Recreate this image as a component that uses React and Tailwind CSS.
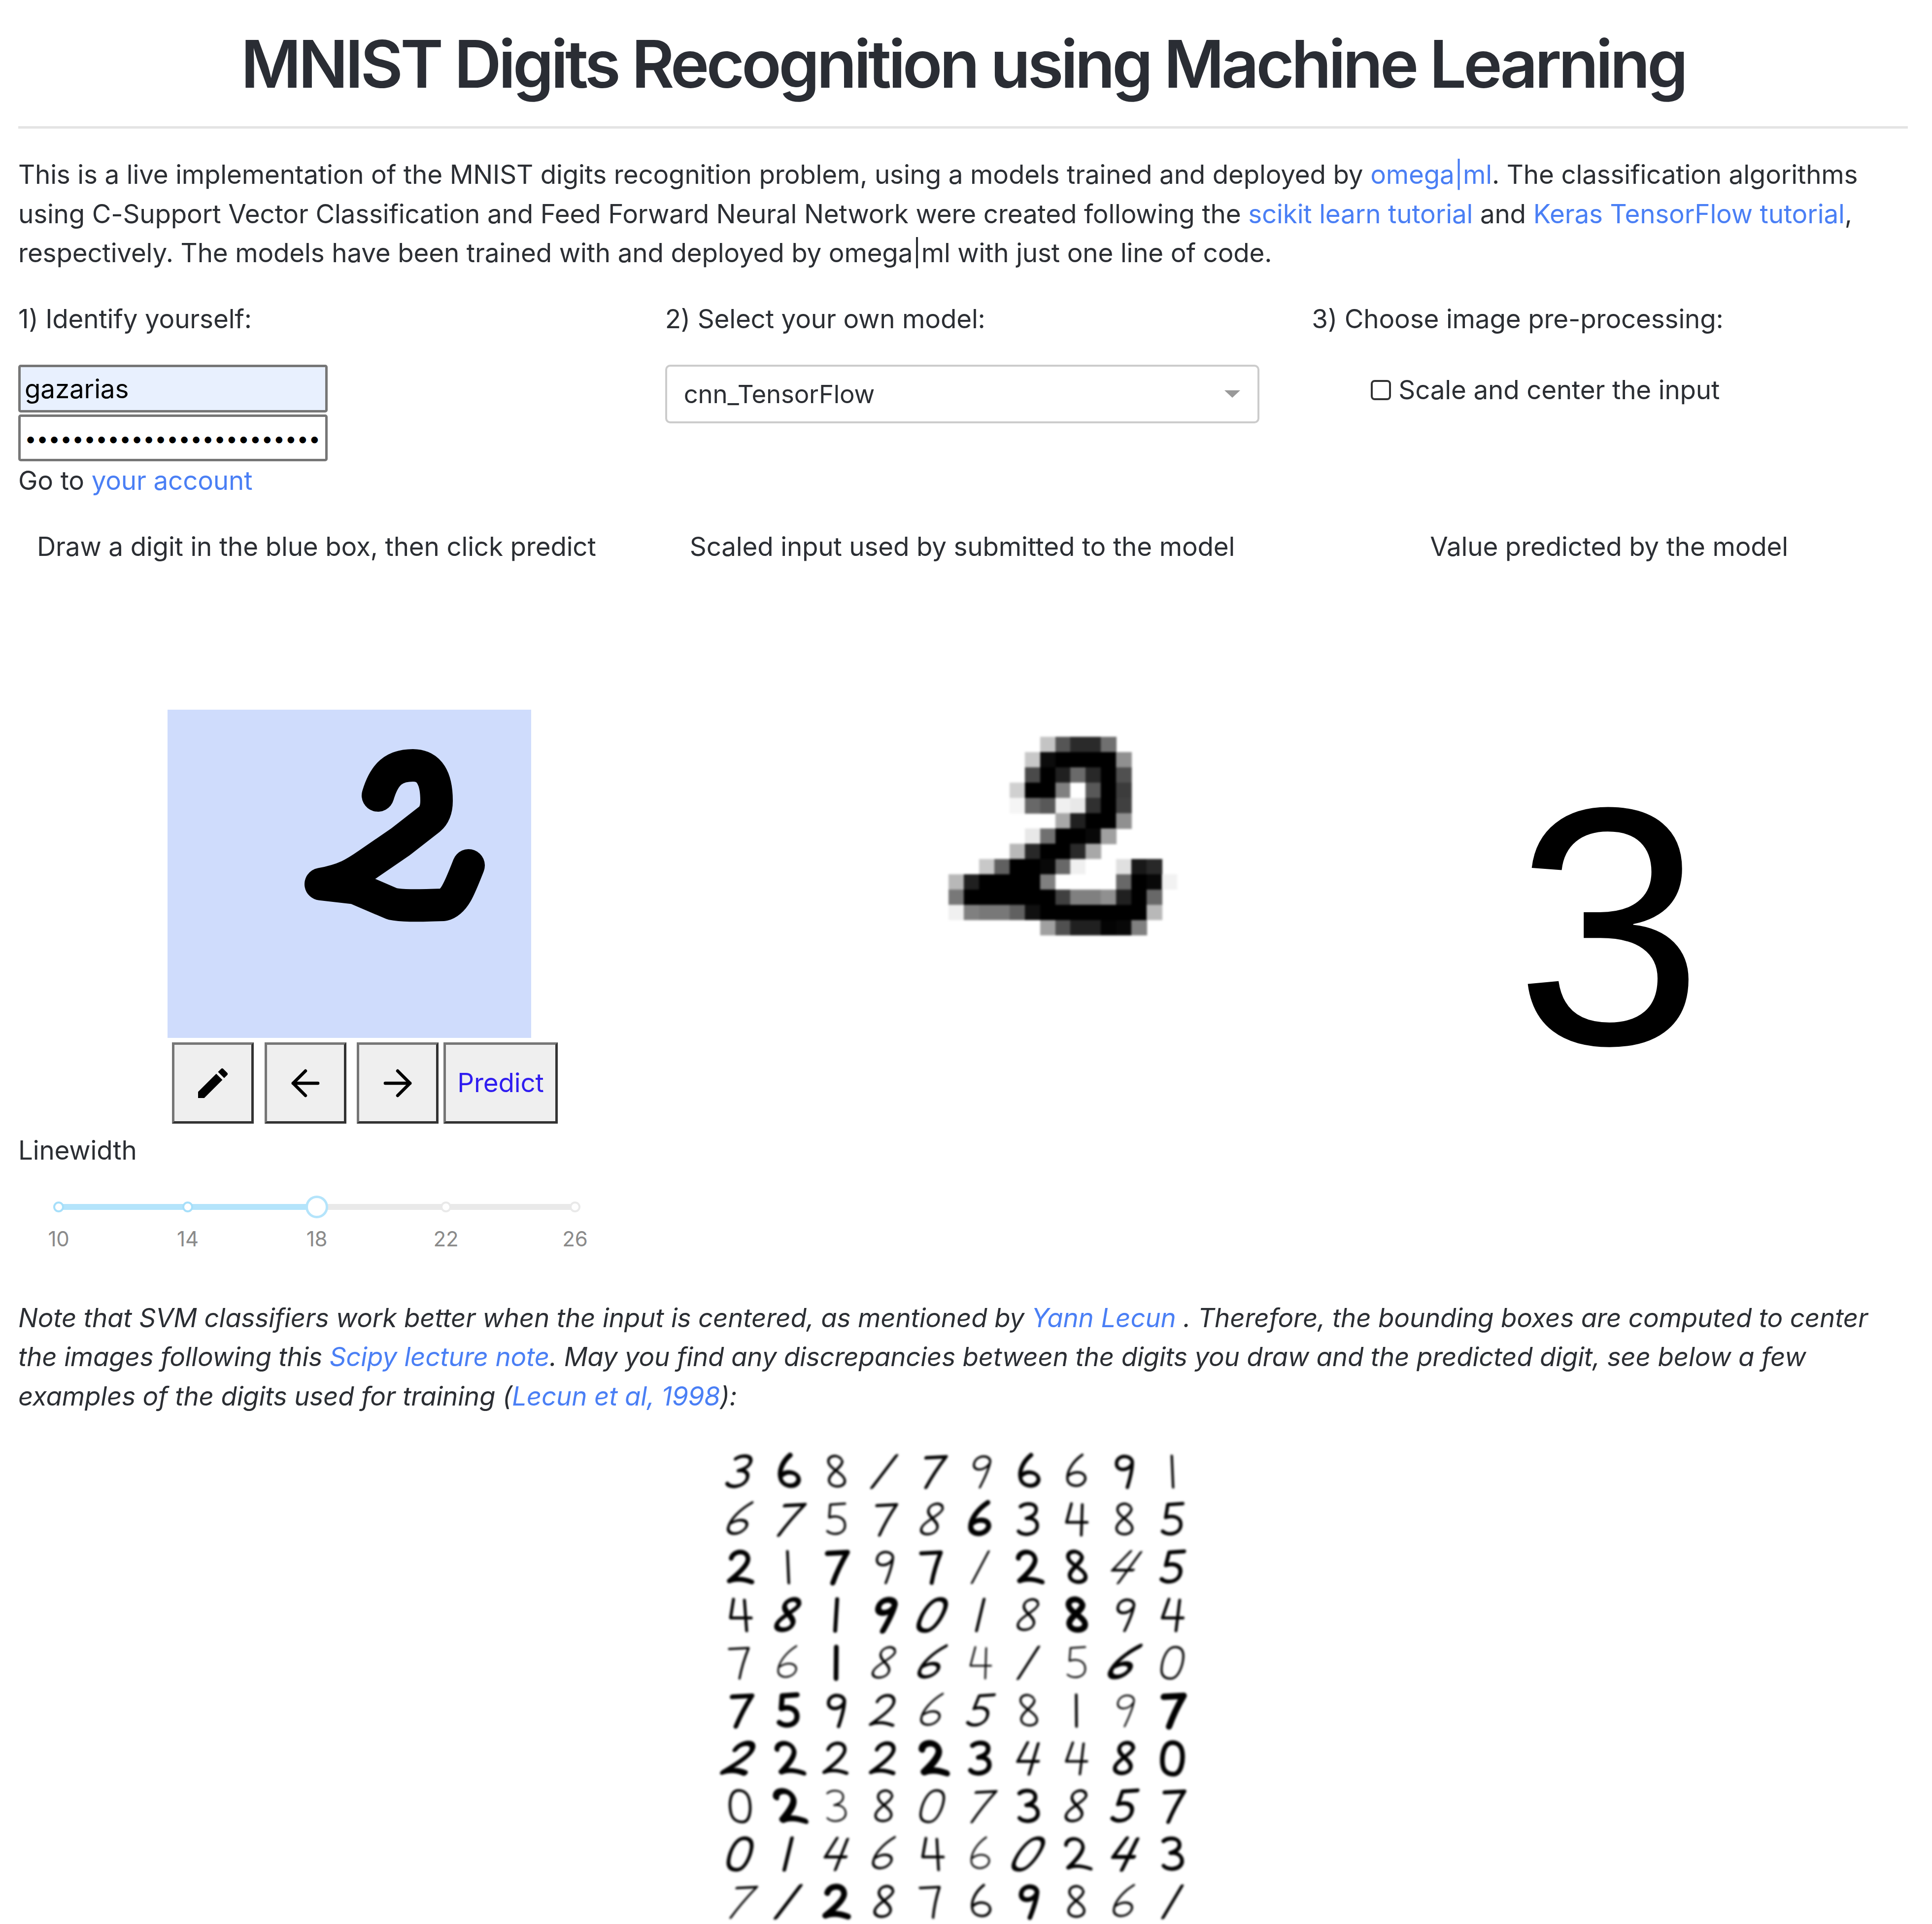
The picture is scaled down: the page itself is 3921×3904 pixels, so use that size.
import { ArrowLeft, ArrowRight } from 'lucide-react';

// grey levels of the downscaled digit, row by row: [first column, values...]
const scaledDigit = [
  [6, 0xc4, 0x55, 0x2a, 0x2a, 0x70],
  [5, 0xc8, 0x0c, 0, 0, 0, 0, 0x90],
  [5, 0x4a, 0, 0x20, 0x6a, 0x28, 0, 0x50],
  [4, 0xd0, 0, 0, 0x80, 0xff, 0x58, 0, 0x3c],
  [4, 0xf5, 0x68, 0x58, 0xf0, 0xe8, 0x30, 0, 0x40],
  [7, 0xa8, 0x20, 0, 0, 0x90],
  [5, 0xe8, 0x70, 0, 0, 0x08, 0xa0],
  [4, 0xb8, 0x28, 0, 0, 0x2a, 0xa8],
  [2, 0xc8, 0x60, 0, 0, 0x08, 0x68, 0xf0, 0xff, 0xff, 0xe0, 0x18, 0x28],
  [0, 0xb8, 0x20, 0, 0, 0, 0, 0x80, 0xff, 0xff, 0xff, 0xff, 0x68, 0, 0x08, 0xf2],
  [0, 0x78, 0, 0, 0, 0, 0, 0, 0x40, 0x80, 0x80, 0x90, 0x20, 0, 0x68],
  [0, 0xf0, 0x80, 0x78, 0x78, 0x60, 0x10, 0, 0, 0, 0, 0, 0, 0, 0xb8],
  [6, 0xa0, 0x50, 0x20, 0x20, 0x04, 0x08, 0x80],
];

const digitStrokes = {
  0: 'M0,-32 C-18,-32 -22,-5 -20,12 C-18,30 -5,32 2,32 C18,32 22,5 20,-12 C18,-28 8,-32 0,-32Z',
  1: 'M2,-32 L-2,32',
  2: 'M-18,-18 C-14,-34 14,-36 16,-18 C18,-4 -10,18 -22,28 C-8,22 8,24 24,30',
  3: 'M-16,-26 C-6,-34 16,-34 16,-20 C16,-8 2,-4 -4,-2 C10,-4 20,4 18,16 C14,32 -12,34 -20,24',
  4: 'M-10,-32 L-20,6 L22,6 M12,-30 L10,32',
  5: 'M18,-32 L-12,-30 L-14,-4 C4,-10 18,-2 18,12 C18,30 -6,34 -18,24',
  6: 'M12,-34 C-8,-20 -20,0 -18,16 C-16,32 12,34 18,16 C20,2 0,-4 -16,8',
  7: 'M-20,-28 L20,-30 C10,-10 2,10 -4,32',
  8: 'M12,-26 C4,-36 -14,-32 -14,-20 C-14,-6 16,4 16,18 C16,34 -16,34 -16,18 C-16,4 16,-10 14,-22',
  9: 'M16,-20 C12,-36 -16,-34 -16,-16 C-16,0 10,0 16,-18 C16,0 10,18 6,32',
};

// training samples: [digit, slant, stroke width]
const samples = [
  [[3, 15, 7], [6, -12, 9], [8, -5, 5], [1, 35, 7], [7, 15, 7], [9, 12, 4.5], [6, -10, 8], [6, 0, 5], [9, 0, 7], [1, -6, 5]],
  [[6, 20, 5.5], [7, 25, 7], [5, 0, 4.5], [7, 10, 6], [8, 18, 5], [6, 5, 10.5], [3, 0, 7], [4, 0, 5.5], [8, 0, 5], [5, 5, 7]],
  [[2, 0, 9.5], [1, -6, 5.5], [7, 5, 10.5], [9, 5, 5], [7, -5, 8], [1, 25, 4.5], [2, -8, 9.5], [8, -8, 8], [4, 35, 5.5], [5, 10, 8]],
  [[4, -6, 6], [8, 20, 9.5], [1, 0, 8], [9, 15, 12], [0, 25, 8.5], [1, 10, 6], [8, 15, 5], [8, -5, 12], [9, 10, 5.5], [4, 5, 6]],
  [[7, -5, 4.5], [6, 8, 3.5], [1, -3, 9.5], [8, 20, 4.5], [6, 25, 7], [4, 0, 3.5], [1, 30, 6], [5, 0, 3.5], [6, 30, 9.5], [0, 10, 4.5]],
  [[7, 8, 9.5], [5, 0, 10.5], [9, 2, 7], [2, 12, 6], [6, 15, 4.5], [5, 18, 6], [8, -5, 4.5], [1, -4, 5.5], [9, 10, 3.5], [7, 5, 13]],
  [[2, 25, 10.5], [2, -15, 9.5], [2, 5, 7], [2, 10, 8], [2, -10, 13], [3, 0, 9.5], [4, 15, 6], [4, 5, 5], [8, 10, 8], [0, 0, 9.5]],
  [[0, -5, 5.5], [2, -20, 12], [3, -5, 3.5], [8, 5, 5], [0, 15, 5], [7, 22, 5.5], [3, -5, 8], [8, 15, 5.5], [5, 15, 8], [7, 8, 8]],
  [[0, 15, 7.5], [1, 10, 7.5], [4, 20, 6], [6, 15, 5], [4, -5, 5.5], [6, 0, 3.5], [0, 30, 7.5], [2, -10, 7], [4, 25, 8], [3, -5, 8]],
  [[7, 25, 5], [1, 35, 8.5], [2, 0, 12], [8, 10, 5.5], [7, -10, 5], [6, -8, 5], [9, 5, 9.5], [8, 0, 5], [6, 12, 4.5], [1, 28, 7]],
];

const link = 'text-[#4a7ff5]';

function App() {
  return (
    <div className="h-[3904px] overflow-hidden bg-white pl-[37px] pr-[49px] pt-[50px] font-['Inter',sans-serif] text-[53px] leading-[79.5px] tracking-[-0.18px] text-[#2b2e33]">
      <h1 className="whitespace-nowrap text-center text-[133px] font-semibold leading-[160px] tracking-[-5.9px] text-[#2a2d34]">
        MNIST Digits Recognition using Machine Learning
      </h1>
      <hr className="mt-[46px] h-[5px] border-0 bg-[#e4e4e4]" />

      <p className="mt-[54px] whitespace-nowrap">
        This is a live implementation of the MNIST digits recognition problem, using a models trained and deployed by <a className={link}>omega|ml</a>. The classification algorithms<br />
        using C-Support Vector Classification and Feed Forward Neural Network were created following the <a className={link}>scikit learn tutorial</a> and <a className={link}>Keras TensorFlow tutorial</a>,<br />
        respectively. The models have been trained with and deployed by omega|ml with just one line of code.
      </p>

      <div className="mr-[3px] mt-[54px] grid grid-cols-3 gap-x-[106px]">
        <div>
          <div>1) Identify yourself:</div>
          <input
            readOnly
            value="gazarias"
            className="mt-[53px] block h-[97px] w-[628px] rounded-[5px] border-[5px] border-[#767676] bg-[#e8f0fe] px-[8px] text-black outline-none"
          />
          <input
            readOnly
            type="password"
            value="aaaaaaaaaaaaaaaaaaaaaaaaaaa"
            className="mt-[4px] block h-[95px] w-[628px] rounded-[5px] border-[5px] border-[#767676] bg-white px-[8px] text-[43px] text-black outline-none"
          />
          <div>Go to <a className={link}>your account</a></div>
        </div>

        <div>
          <div>2) Select your own model:</div>
          <div className="mt-[53px] flex h-[119px] items-center justify-between rounded-[10px] border-[4px] border-[#cccccc] pl-[34px] pr-[35px] text-[51px]">
            <span>cnn_TensorFlow</span>
            <span className="border-x-[16px] border-t-[15px] border-x-transparent border-t-[#999999]" />
          </div>
        </div>

        <div>
          <div>3) Choose image pre-processing:</div>
          <label className="ml-[120px] mt-[65px] flex items-center gap-[15px]">
            <span className="h-[41px] w-[41px] rounded-[8px] border-[4px] border-[#333333] bg-white" />
            <span>Scale and center the input</span>
          </label>
        </div>
      </div>

      <div className="mr-[3px] mt-[54px] grid grid-cols-3 gap-x-[106px]">
        <div>
          <div className="pl-[38px]">Draw a digit in the blue box, then click predict</div>
          <svg viewBox="340 1440 738 666" className="ml-[303px] mt-[291px] block h-[666px] w-[738px]">
            <rect x="340" y="1440" width="738" height="666" fill="#cfdcfc" />
            <path
              d="M767 1614 C780 1570 800 1553 838 1553 C872 1553 886 1580 886 1625 C886 1645 880 1655 872 1662 L813 1708 L746 1754 C720 1772 700 1785 651 1794 L721 1802 L796 1834 C815 1838 840 1838 900 1836 C922 1830 932 1805 951 1756"
              fill="none"
              stroke="#000"
              strokeWidth="66"
              strokeLinecap="round"
              strokeLinejoin="round"
            />
          </svg>
          <div className="ml-[312px] mt-[9px] flex">
            <ToolButton className="w-[166px]"><PencilIcon /></ToolButton>
            <ToolButton className="ml-[22px] w-[166px]"><ArrowLeft size={86} strokeWidth={1.8} color="#000" /></ToolButton>
            <ToolButton className="ml-[21px] w-[166px]"><ArrowRight size={86} strokeWidth={1.8} color="#000" /></ToolButton>
            <ToolButton className="ml-[10px] w-[232px] text-[#2f1cf0]">Predict</ToolButton>
          </div>
          <div className="mt-[15px]">Linewidth</div>
          <LineWidthSlider />
        </div>

        <div>
          <div className="text-center">Scaled input used by submitted to the model</div>
          <ScaledDigit />
        </div>

        <div>
          <div className="text-center">Value predicted by the model</div>
          <div className="mt-[387px] text-center font-['Liberation_Sans',sans-serif] text-[688px] leading-none text-black">3</div>
        </div>
      </div>

      <p className="mt-[96px] whitespace-nowrap italic tracking-[-0.24px]">
        Note that SVM classifiers work better when the input is centered, as mentioned by <a className={link}>Yann Lecun</a> . Therefore, the bounding boxes are computed to center<br />
        the images following this <a className={link}>Scipy lecture note</a>. May you find any discrepancies between the digits you draw and the predicted digit, see below a few<br />
        examples of the digits used for training (<a className={link}>Lecun et al, 1998</a>):
      </p>

      <svg viewBox="0 0 980 990" className="ml-[1413px] mt-[63px] block h-[990px] w-[980px] blur-[2px]">
        {samples.map((row, r) =>
          row.map(([digit, slant, weight], c) => (
            <path
              key={`${r}-${c}`}
              d={digitStrokes[digit]}
              transform={`translate(${52 + c * 97.5} ${50 + r * 97}) skewX(${-slant})`}
              fill="none"
              stroke="#000"
              strokeWidth={weight}
              strokeLinecap="round"
              strokeLinejoin="round"
            />
          ))
        )}
      </svg>
    </div>
  );
}

function ToolButton({ className, children }) {
  return (
    <div className={`flex h-[165px] items-center justify-center border-[5px] border-b-[#333333] border-l-[#767676] border-r-[#333333] border-t-[#767676] bg-[#efefef] ${className}`}>
      {children}
    </div>
  );
}

function PencilIcon() {
  return (
    <svg viewBox="0 0 24 24" className="h-[80px] w-[80px]" fill="#000">
      <path d="M3 17.25V21h3.75L17.81 9.94l-3.75-3.75L3 17.25zM20.71 7.04a1 1 0 0 0 0-1.41l-2.34-2.34a1 1 0 0 0-1.41 0l-1.83 1.83 3.75 3.75 1.83-1.83z" />
    </svg>
  );
}

function LineWidthSlider() {
  const marks = [10, 14, 18, 22, 26];
  return (
    <div className="ml-[82px] mt-[68px] w-[1048px]">
      <div className="relative h-[12px] rounded-full bg-[#e9e9e9]">
        <div className="h-full w-[523px] rounded-full bg-[#b4e4fb]" />
        <div className="absolute inset-x-0 top-1/2 flex justify-between">
          {marks.map((m, i) => (
            <div key={m} className="relative w-0">
              <span
                className={
                  m === 18
                    ? 'absolute left-[-23px] top-[-23px] h-[46px] w-[46px] rounded-full border-[5px] border-[#b4e4fb] bg-white'
                    : i < 2
                      ? 'absolute left-[-11px] top-[-11px] h-[22px] w-[22px] rounded-full border-[4px] border-[#a6dffa] bg-white'
                      : 'absolute left-[-11px] top-[-11px] h-[22px] w-[22px] rounded-full border-[4px] border-[#e9e9e9] bg-white'
                }
              />
            </div>
          ))}
        </div>
      </div>
      <div className="mt-[34px] flex justify-between text-[42px] leading-[50px] text-[#8a8a8a]">
        {marks.map((m) => (
          <div key={m} className="flex w-0 justify-center">{m}</div>
        ))}
      </div>
    </div>
  );
}

function ScaledDigit() {
  return (
    <svg viewBox="0 0 15 13" className="ml-[575px] mt-[346px] block h-[403px] w-[464px] blur-[2px]" shapeRendering="crispEdges">
      {scaledDigit.map(([start, ...values], r) =>
        values.map((v, i) => (
          <rect key={`${r}-${i}`} x={start + i} y={r} width="1.02" height="1.02" fill={`rgb(${v},${v},${v})`} />
        ))
      )}
    </svg>
  );
}

export default App;
